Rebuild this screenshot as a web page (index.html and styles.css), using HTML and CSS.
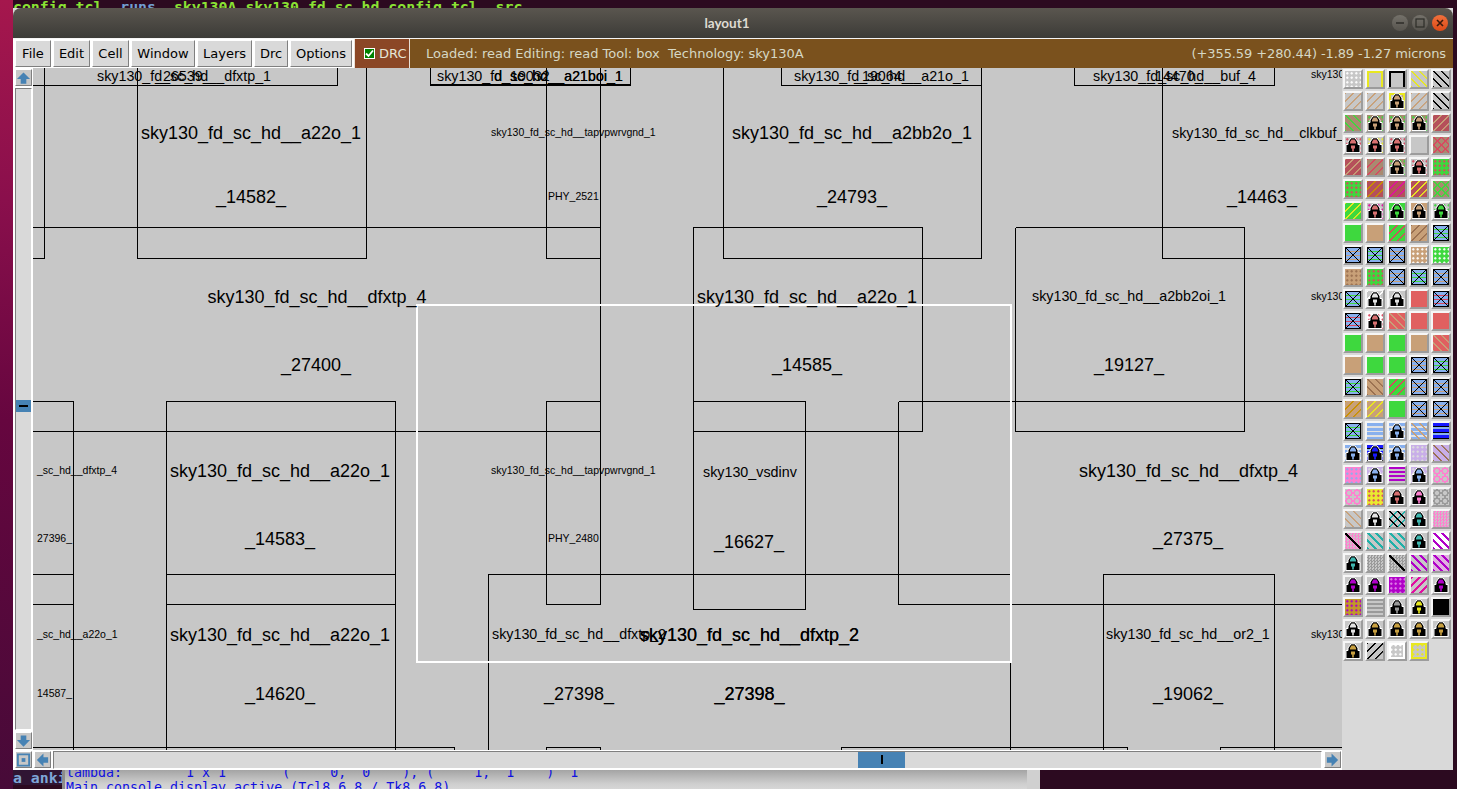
FILE: index.html
```html
<!DOCTYPE html>
<html lang="en">
<head>
<meta charset="utf-8">
<title>layout1</title>
<link rel="stylesheet" href="styles.css">
</head>
<body>
<svg class="defs" width="0" height="0" aria-hidden="true">
  <symbol id="lk" viewBox="0 0 16 16">
    <path fill="#000" stroke="#fff" d="M1 15.500V7.500h2V5L6 .8h4L13 5v2.500h2v8z"/>
    <path fill="currentColor" d="M5 6.500V5l1.500-2.500h3L11 5v1.500z"/>
    <rect x="6" y="8.500" width="4" height="3" fill="currentColor"/>
    <rect x="7.200" y="11" width="1.600" height="3.500" fill="currentColor"/>
  </symbol>
  <symbol id="up" viewBox="0 0 16 16"><path fill="#4682b4" d="M8 2l7 7h-4v5H5V9H1z"/></symbol>
  <symbol id="dn" viewBox="0 0 16 16"><path fill="#4682b4" d="M8 14l7-7h-4V2H5v5H1z"/></symbol>
  <symbol id="lf" viewBox="0 0 16 16"><path fill="#4682b4" d="M2 8l7-7v4h5v6H9v4z"/></symbol>
  <symbol id="rt" viewBox="0 0 16 16"><path fill="#4682b4" d="M14 8L7 1v4H2v6h5v4z"/></symbol>
</svg>

<div class="strip"></div>
<div class="desk">
  <div class="term-top"><span class="gr">config.tcl</span>  <span class="bl">runs</span>  <span class="gr">sky130A</span> <span class="gr">sky130_fd_sc_hd_config.tcl</span>  <span class="gr">src</span></div>
  <div class="desk-gap"></div>
  <div class="term-bottom">
    <div class="shell">a_anki</div>
    <div class="console">
      <div class="con-line">lambda:        1 x 1       (     0,  0    ), (     1,  1    )  1</div>
      <div class="con-line">Main console display active (Tcl8.6.8 / Tk8.6.8)</div>
    </div>
    <div class="shell-right"></div>
  </div>
</div>

<div class="win">
  <div class="title">
    <div class="title-text">layout1</div>
    <div class="controls">
      <span class="ctl"><svg width="10" height="10" viewBox="0 0 10 10"><path d="M1 5h8" stroke="#2e2d29" stroke-width="1.500"/></svg></span>
      <span class="ctl"><svg width="10" height="10" viewBox="0 0 10 10"><rect x="1" y="1" width="8" height="8" fill="none" stroke="#2e2d29" stroke-width="1.200"/></svg></span>
      <span class="ctl close"><svg width="10" height="10" viewBox="0 0 10 10"><path d="M2 2l6 6M8 2l-6 6" stroke="#3a1a0c" stroke-width="1.600"/></svg></span>
    </div>
  </div>
  <div class="bar">
    <div class="menu">
      <span class="mb w-file">File</span><span class="mb w-edit">Edit</span><span class="mb w-cell">Cell</span><span class="mb w-window">Window</span><span class="mb w-layers">Layers</span><span class="mb w-drc">Drc</span><span class="mb w-options">Options</span>
    </div>
    <div class="drc"><span class="chk"><svg width="9" height="9" viewBox="0 0 9 9"><path d="M1 4.500l2.500 2.500L8 1.500" fill="none" stroke="#fff" stroke-width="1.800"/></svg></span>DRC</div>
    <div class="status"><span>Loaded: read Editing: read Tool: box&nbsp; Technology: sky130A</span><span class="coords">(+355.59 +280.44) -1.89 -1.27 microns</span></div>
  </div>
  <div class="work">
    <div class="vs">
      <span class="arrow"><svg width="16" height="16"><use href="#up"/></svg></span>
      <div class="vtrough"><span class="vthumb"></span></div>
      <span class="arrow"><svg width="16" height="16"><use href="#dn"/></svg></span>
    </div>
    <svg class="canvas" width="1309" height="682" viewBox="33 68 1309 682">
      <path class="ln" d="M33 85.500H337.500V68M44.500 68V258.500H33M137.500 68V258.500H366.500V68M33 227.500H600.500M546.500 258.500H600.500M546.500 68V258.500M600.500 68V604.500M33 401.500H73.500V750M166.500 750V401.500H395.500V750M33 431.500H600.500M546.500 604.500V401.500H600.500M546.500 604.500H600.500M33 574.500H73.500M33 604.500H73.500M166.500 574.500H395.500M166.500 604.500H395.500M488.500 750V574.500H1010.500V750M723.500 68V258.500H981.500V68M781.500 85.500H981.500M781.500 68V85.500M693.500 610V227.500H922.500V431.500H693.500M693.500 401.500H805.500V609.500H693.500M898.500 401.500H1342M898.500 401.500V604.500H1342M1015.500 227.500H1244.500V431.500H1015.500V227.500M1162.500 68V258.500H1342M1103.500 750V574.500H1274.500V750M1074.500 68V85.500H1274.500V68M33 747.500H454.500V750M546.500 750V747.500H600.500V750M841.500 750V747.500H1127.500V750M1220.500 750V747.500H1342M430.500 68V85M630.500 68V85"/>
      <path class="ln thick" d="M430 85H631"/>
      <path class="sel" d="M417 305H1011V662H417z"/>

      <g class="big">
        <text x="251" y="139">sky130_fd_sc_hd__a22o_1</text>
        <text x="251" y="203">_14582_</text>
        <text x="852" y="139">sky130_fd_sc_hd__a2bb2o_1</text>
        <text x="852" y="203">_24793_</text>
        <text x="1262" y="203">_14463_</text>
        <text x="317" y="303">sky130_fd_sc_hd__dfxtp_4</text>
        <text x="316" y="371">_27400_</text>
        <text x="807" y="303">sky130_fd_sc_hd__a22o_1</text>
        <text x="807" y="371">_14585_</text>
        <text x="1129" y="371">_19127_</text>
        <text x="280" y="477">sky130_fd_sc_hd__a22o_1</text>
        <text x="280" y="545">_14583_</text>
        <text x="1188.500" y="477">sky130_fd_sc_hd__dfxtp_4</text>
        <text x="1188" y="545">_27375_</text>
        <text x="749" y="548">_16627_</text>
        <text x="280" y="641">sky130_fd_sc_hd__a22o_1</text>
        <text x="280" y="700">_14620_</text>
        <text x="749.500" y="641">sky130_fd_sc_hd__dfxtp_2</text>
        <text x="749.500" y="641">sky130_fd_sc_hd__dfxtp_2</text>
        <text x="749.500" y="700">_27398_</text>
        <text x="749.500" y="700">_27398_</text>
        <text x="579" y="700">_27398_</text>
        <text x="1188" y="700">_19062_</text>
      </g>
      <g class="mid">
        <text x="97" y="81">sky130_fd_sc_hd__dfxtp_1</text>
        <text x="155" y="81">_26539_</text>
        <text x="437" y="81">sky130_fd_sc_hd__a21boi_1</text>
        <text x="494" y="81">d_sc_hd__a21boi_1</text>
        <text x="502" y="81">_19032_</text>
        <text x="794" y="81">sky130_fd_sc_hd__a21o_1</text>
        <text x="854" y="81">_19064_</text>
        <text x="1093" y="81">sky130_fd_sc_hd__buf_4</text>
        <text x="1147" y="81">_14470_</text>
        <text x="1172" y="138">sky130_fd_sc_hd__clkbuf_1</text>
        <text x="1032" y="301">sky130_fd_sc_hd__a2bb2oi_1</text>
        <text x="703" y="477">sky130_vsdinv</text>
        <text x="492" y="639">sky130_fd_sc_hd__dfxtp_2</text>
        <text x="1106" y="639">sky130_fd_sc_hd__or2_1</text>
      </g>
      <g class="small">
        <text x="491" y="136">sky130_fd_sc_hd__tapvpwrvgnd_1</text>
        <text x="548" y="200">PHY_2521</text>
        <text x="491" y="474">sky130_fd_sc_hd__tapvpwrvgnd_1</text>
        <text x="548" y="542">PHY_2480</text>
        <text x="37" y="474">_sc_hd__dfxtp_4</text>
        <text x="37" y="542">27396_</text>
        <text x="37" y="638">_sc_hd__a22o_1</text>
        <text x="37" y="697">14587_</text>
        <text x="1311" y="78">sky130</text>
        <text x="1311" y="300">sky130</text>
        <text x="1311" y="638">sky130</text>
      </g>
    </svg>
    <div class="pal">
      <span class="t bG dt cW"></span><span class="t bG yb"></span><span class="t bG kb"></span><span class="t bG bs cY"></span><span class="t bG bs cK"></span>
      <span class="t bG st cT"></span><span class="t bG st cT"></span><span class="t bG st cT yb"><svg class="lk cT"><use href="#lk"/></svg></span><span class="t bG st cT"></span><span class="t bG bs cK"></span>
      <span class="t bB bs cN"></span><span class="t bB dt cN"><svg class="lk cT"><use href="#lk"/></svg></span><span class="t bB dt cN"><svg class="lk cT"><use href="#lk"/></svg></span><span class="t bB dt cN"><svg class="lk cT"><use href="#lk"/></svg></span><span class="t bR st cT"></span>
      <span class="t bG dt cR"><svg class="lk cR"><use href="#lk"/></svg></span><span class="t bG dt cY"><svg class="lk cR"><use href="#lk"/></svg></span><span class="t bG dt cR"><svg class="lk cR"><use href="#lk"/></svg></span><span class="t bG"></span><span class="t bB cr cR"></span>
      <span class="t bR st cT"></span><span class="t bB st cR"></span><span class="t bB dt cN"><svg class="lk cT"><use href="#lk"/></svg></span><span class="t bG dt cR"><svg class="lk cR"><use href="#lk"/></svg></span><span class="t bN dt cR"></span>
      <span class="t bN dt cR"></span><span class="t bR st cO"></span><span class="t bR st cM"></span><span class="t bR st cY"></span><span class="t bB cr cN"></span>
      <span class="t bN st cY"></span><span class="t bG dt cM"><svg class="lk cR"><use href="#lk"/></svg></span><span class="t bN"><svg class="lk cN"><use href="#lk"/></svg></span><span class="t bT"><svg class="lk cT"><use href="#lk"/></svg></span><span class="t bG dt cN"><svg class="lk cN"><use href="#lk"/></svg></span>
      <span class="t bN"></span><span class="t bT"></span><span class="t bN st cR"></span><span class="t bT st cB"></span><span class="t xb cN"></span>
      <span class="t xb cT"></span><span class="t xb cN"></span><span class="t xb cT"></span><span class="t bT dt cW"></span><span class="t bN dt cW"></span>
      <span class="t bT dt cB"></span><span class="t bN dt cR"></span><span class="t xb cT"></span><span class="t xb cN"></span><span class="t xb cT"></span>
      <span class="t xb cN"></span><span class="t bG st cW"><svg class="lk cW"><use href="#lk"/></svg></span><span class="t bG"><svg class="lk cW"><use href="#lk"/></svg></span><span class="t bL"></span><span class="t xb cR"></span>
      <span class="t xb cR"></span><span class="t bW dt cR"><svg class="lk cR"><use href="#lk"/></svg></span><span class="t bL bs cT"></span><span class="t bL"></span><span class="t bL"></span>
      <span class="t bN"></span><span class="t bT"></span><span class="t bN"></span><span class="t bT"></span><span class="t bL bs cT"></span>
      <span class="t bT"></span><span class="t bN"></span><span class="t bN"></span><span class="t xb cT"></span><span class="t xb cN"></span>
      <span class="t xb cN"></span><span class="t bT bs cB"></span><span class="t bN st cR"></span><span class="t xb cT"></span><span class="t xb cT"></span>
      <span class="t bT st cO"></span><span class="t bT st cY"></span><span class="t bN"></span><span class="t xb cT"></span><span class="t xb cT"></span>
      <span class="t xb cN"></span><span class="t wv cA"></span><span class="t wv cA"><svg class="lk cA"><use href="#lk"/></svg></span><span class="t wv cT"></span><span class="t bH"></span>
      <span class="t wv cA"><svg class="lk cA"><use href="#lk"/></svg></span><span class="t bH"><svg class="lk cH"><use href="#lk"/></svg></span><span class="t wv cA"><svg class="lk cA"><use href="#lk"/></svg></span><span class="t bI dt cG"></span><span class="t bI bs cB"></span>
      <span class="t bP dt cA"></span><span class="t bI dt cG"><svg class="lk cA"><use href="#lk"/></svg></span><span class="t bG bd cU"></span><span class="t bI dt cG"><svg class="lk cA"><use href="#lk"/></svg></span><span class="t qf cP"></span>
      <span class="t qf cP"></span><span class="t bY dt cR"></span><span class="t bG"><svg class="lk cR"><use href="#lk"/></svg></span><span class="t bG"><svg class="lk cP"><use href="#lk"/></svg></span><span class="t qf cZ"></span>
      <span class="t bG bs cT"></span><span class="t bG"><svg class="lk cW"><use href="#lk"/></svg></span><span class="t bG cr cE tk"></span><span class="t bG"><svg class="lk cE"><use href="#lk"/></svg></span><span class="t dn cP"></span>
      <span class="t dn cP bk"></span><span class="t bG bs cE wd"></span><span class="t bG bs cE wd"></span><span class="t bG"><svg class="lk cE"><use href="#lk"/></svg></span><span class="t bW bs cU wd"></span>
      <span class="t bG"><svg class="lk cE"><use href="#lk"/></svg></span><span class="t dn cZ"></span><span class="t dn cZ bk"></span><span class="t bG bs cU wd"></span><span class="t bP2 bs cU wd"></span>
      <span class="t bG"><svg class="lk cU"><use href="#lk"/></svg></span><span class="t bG"><svg class="lk cU"><use href="#lk"/></svg></span><span class="t bU dt cV"></span><span class="t bG st cM wd"></span><span class="t bG"><svg class="lk cU"><use href="#lk"/></svg></span>
      <span class="t bO dt cU"></span><span class="t bG bd cZ"></span><span class="t bG"><svg class="lk cZ"><use href="#lk"/></svg></span><span class="t bG"><svg class="lk cY"><use href="#lk"/></svg></span><span class="t bK"></span>
      <span class="t bG"><svg class="lk cW"><use href="#lk"/></svg></span><span class="t bG"><svg class="lk cO"><use href="#lk"/></svg></span><span class="t bG"><svg class="lk cO"><use href="#lk"/></svg></span><span class="t bG"><svg class="lk cO"><use href="#lk"/></svg></span><span class="t bG"><svg class="lk cO"><use href="#lk"/></svg></span>
      <span class="t bG"><svg class="lk cO"><use href="#lk"/></svg></span><span class="t bG st cK"></span><span class="t bG dt cW wb"></span><span class="t bG dt cY ybr"></span>
    </div>
    <div class="hs">
      <span class="arrow zoom"><svg width="16" height="16" viewBox="0 0 16 16"><path fill="none" stroke="#4682b4" stroke-width="2" d="M2 2h12v12H2z"/><rect x="6" y="6" width="4" height="4" fill="#4682b4"/></svg></span>
      <span class="arrow"><svg width="16" height="16"><use href="#lf"/></svg></span>
      <div class="htrough"><span class="hthumb"></span></div>
      <span class="arrow"><svg width="16" height="16"><use href="#rt"/></svg></span>
    </div>
  </div>
</div>
</body>
</html>
```

FILE: styles.css
```css
* { box-sizing: border-box; }
html, body { margin: 0; height: 789px; overflow: hidden; }
body { display: flex; width: 1457px; background: #2c0a20; position: relative; }
.defs { position: absolute; }
.strip { width: 13px; background: linear-gradient(180deg, #a5174d 0, #8a0f4c 200px, #66063f 420px, #470a38 789px); }
.desk { flex: 1; display: flex; flex-direction: column; min-width: 0; }
.term-top { height: 8px; overflow: hidden; white-space: pre; font: 700 14.85px/15px "DejaVu Sans Mono", monospace; }
.gr { color: #8ae234; }
.bl { color: #729fcf; }
.desk-gap { flex: 1; }
.term-bottom { height: 19px; display: flex; }
.shell { width: 49px; height: 15px; overflow: hidden; background: #2f1533; color: #7ea6d8; font: 700 14.85px/16px "DejaVu Sans Mono", monospace; }
.console { width: 978px; padding-left: 1px; background: linear-gradient(180deg, #a4a4a4 0, #cfcfcf 14px, #d6d6d6); border-left: 3px solid #8c8c8c; border-right: 13px solid #d0d0d0; overflow: hidden; }
.con-line { font: 13.3px/15px "DejaVu Sans Mono", monospace; color: #1010e0; white-space: pre; position: relative; top: -5px; }
.shell-right { flex: 1; }

.win { position: absolute; left: 13px; top: 8px; width: 1440px; height: 762px; display: flex; flex-direction: column; background: #d9d9d9; }
.title { height: 30px; flex: none; display: flex; align-items: center; justify-content: center; position: relative; border-radius: 8px 8px 0 0; background: linear-gradient(180deg, #5a564f, #3c3b37); }
.title-text { font: 700 13.5px "Lato", sans-serif; color: #dfdbd2; margin-right: 12px; }
.controls { position: absolute; right: 5px; top: 7px; display: flex; gap: 4px; }
.ctl { width: 16px; height: 16px; border-radius: 50%; display: flex; align-items: center; justify-content: center; background: linear-gradient(180deg, #74716a, #57544e); }
.close { background: linear-gradient(180deg, #f0703c, #dc4a17); }

.bar { height: 30px; flex: none; display: flex; background: #d9d9d9; border-top: 1px solid #f4f4f4; }
.menu { display: flex; gap: 2px; padding: 1px 0 1px 2px; width: 341px; background: #fff; }
.mb { height: 27px; display: flex; align-items: center; justify-content: center; background: #d9d9d9; border: 1px solid; border-color: #fff #7f7f7f #7f7f7f #fff; font: 13px "DejaVu Sans", sans-serif; color: #000; }
.w-file { width: 36px; } .w-edit { width: 37px; } .w-cell { width: 37px; } .w-window { width: 64px; } .w-layers { width: 55px; } .w-drc { width: 34px; } .w-options { width: 62px; }
.drc { width: 56px; display: flex; align-items: center; gap: 4px; padding-left: 9px; background: #8b4726; border: 1px solid #e8e0d8; border-width: 0 1px 0 1px; font: 13px "DejaVu Sans", sans-serif; color: #e6e6d8; }
.chk { width: 11px; height: 11px; display: flex; align-items: center; justify-content: center; background: #008000; border: 1px solid #fff; }
.status { flex: 1; display: flex; justify-content: space-between; padding: 0 7px 0 16px; align-items: center; background: #7a511d; font: 13px "DejaVu Sans", sans-serif; color: #d6d8c4; white-space: nowrap; }
.coords { letter-spacing: -0.1px; }

.work { flex: 1; display: grid; grid-template-columns: 20px 1309px 111px; grid-template-rows: 682px 20px; background: #d9d9d9; }
.vs { display: flex; flex-direction: column; gap: 2px; padding: 1px 1px 1px 2px; background: #fff; }
.arrow { width: 17px; height: 17px; flex: none; display: flex; align-items: center; justify-content: center; background: #c7c7c7; border: 1px solid; border-color: #fff #7f7f7f #7f7f7f #fff; }
.vtrough { flex: 1; background: #d9d9d9; border: 1px solid; border-color: #7f7f7f #fff #fff #7f7f7f; padding-top: 311px; }
.vthumb { display: flex; align-items: center; justify-content: center; height: 12px; background: #4682b4; }
.vthumb::after { content: ""; width: 9px; height: 2px; background: #000; }
.canvas { display: block; background: #c7c7c7; }
.ln { fill: none; stroke: #000; stroke-width: 1; shape-rendering: crispEdges; }
.thick { stroke-width: 2; }
.sel { fill: none; stroke: #fff; stroke-width: 2; shape-rendering: crispEdges; }
.big text, .mid text, .small text { font-family: "Liberation Sans", Arial, sans-serif; fill: #000; }
.big text { font-size: 18px; text-anchor: middle; }
.mid text { font-size: 14.3px; }
.small text { font-size: 10.5px; }

.pal { grid-column: 3; grid-row: 1 / span 2; display: grid; grid-template-columns: repeat(5, 20px); grid-auto-rows: 20px; gap: 2px; padding: 1px 0 0 1px; align-content: start; background: #d9d9d9; }
.hs { grid-column: 1 / span 2; display: flex; align-items: center; gap: 2px; padding: 0 1px 1px 2px; background: #fff; }
.htrough { flex: 1; height: 18px; background: #d9d9d9; border: 1px solid; border-color: #7f7f7f #fff #fff #7f7f7f; padding-left: 804px; }
.hthumb { display: flex; align-items: center; justify-content: center; width: 47px; height: 100%; background: #4682b4; }
.hthumb::after { content: ""; width: 2px; height: 9px; background: #000; }

.t { --b: #c7c7c7; --c: #000; display: block; width: 20px; height: 20px; border: 2px solid; border-color: #f6f6f6 #9c9c9c #9c9c9c #f6f6f6; background: var(--b); background-clip: padding-box; overflow: hidden; }
.lk { display: block; width: 16px; height: 16px; }
.lk.cT { color: #c8a078; } .lk.cN { color: #3ed83e; } .lk.cR { color: #d87070; } .lk.cW { color: #e4e4e4; } .lk.cA { color: #88b0ee; } .lk.cH { color: #1818ff; } .lk.cP { color: #ff80d0; } .lk.cE { color: #40b8b0; } .lk.cU { color: #b000c8; } .lk.cZ { color: #999; } .lk.cY { color: #e8e820; } .lk.cO { color: #c8a040; }
.bG { --b: #c7c7c7; } .bT { --b: #c8a078; } .bB { --b: #a98a70; } .bR { --b: #b5505a; } .bN { --b: #3ed83e; } .bL { --b: #e06060; } .bI { --b: #c8aee8; } .bP { --b: #ff80d0; } .bP2 { --b: #e0b0e0; } .bU { --b: #b000c8; } .bY { --b: #eaea30; } .bK { --b: #000; } .bW { --b: #fff; } .bO { --b: #c09a28; }
.bH { background: repeating-linear-gradient(180deg, #1818ff 0 3px, #000 3px 4px, #88b0ee 4px 6px) padding-box; }
.cW { --c: #fff; } .cY { --c: #e8e820; } .cK { --c: #000; } .cT { --c: #c8a078; } .cN { --c: #3ed83e; } .cR { --c: #d84860; } .cO { --c: #c89000; } .cM { --c: #e010a0; } .cB { --c: #9a7050; } .cA { --c: #88b0ee; } .cG { --c: #dcdcdc; } .cU { --c: #b000c8; } .cP { --c: #ff80d0; } .cZ { --c: #9a9a9a; } .cE { --c: #20b0a8; } .cV { --c: #e080e8; }
.st { background: repeating-linear-gradient(135deg, var(--c) 0 .8px, transparent 1.100px 5.6px) padding-box, var(--b) padding-box; }
.bs { background: repeating-linear-gradient(45deg, var(--c) 0 .8px, transparent 1.100px 5.6px) padding-box, var(--b) padding-box; }
.wd { background: repeating-linear-gradient(45deg, var(--c) 0 1.600px, transparent 1.900px 5.6px) padding-box, var(--b) padding-box; }
.st.wd { background: repeating-linear-gradient(135deg, var(--c) 0 1.600px, transparent 1.900px 5.6px) padding-box, var(--b) padding-box; }
.cr { background: repeating-linear-gradient(45deg, var(--c) 0 .8px, transparent 1.100px 5.6px) padding-box, repeating-linear-gradient(135deg, var(--c) 0 .8px, transparent 1.100px 5.6px) padding-box, var(--b) padding-box; }
.tk { background: repeating-linear-gradient(45deg, #000 0 1px, transparent 1.200px 5.6px) padding-box, repeating-linear-gradient(135deg, var(--c) 0 1px, transparent 1.200px 5.6px) padding-box, var(--b) padding-box; }
.dt { background: radial-gradient(circle, var(--c) 1.100px, transparent 1.300px) 0 0 / 4.500px 4.500px padding-box, var(--b) padding-box; }
.bd { background: repeating-linear-gradient(180deg, var(--c) 0 2px, transparent 2px 4px) padding-box, var(--b) padding-box; }
.wv { background: repeating-linear-gradient(180deg, var(--c) 0 3px, #e2e2e2 3px 4.500px) padding-box; }
.wv.cT { background: repeating-linear-gradient(45deg, #c8a078 0 1px, transparent 1.200px 5.6px) padding-box, repeating-linear-gradient(180deg, #88b0ee 0 3px, #e2e2e2 3px 4.500px) padding-box; }
.qf { background: radial-gradient(circle, transparent 2px, var(--c) 2.200px 3.600px, transparent 3.800px) 0 0 / 8px 8px padding-box, #c7c7c7 padding-box; }
.dn { background: repeating-conic-gradient(var(--c) 0 25%, #c7c7c7 0 50%) 0 0 / 3px 3px padding-box; }
.bk { background: linear-gradient(45deg, transparent calc(50% - 1px), #000 calc(50% - 1px) calc(50% + 1px), transparent calc(50% + 1px)) padding-box, repeating-conic-gradient(var(--c) 0 25%, #c7c7c7 0 50%) 0 0 / 3px 3px padding-box; }
.xb { background:
  linear-gradient(45deg, transparent calc(50% - .7px), #000 calc(50% - .7px) calc(50% + .7px), transparent calc(50% + .7px)) padding-box,
  linear-gradient(-45deg, transparent calc(50% - .7px), #000 calc(50% - .7px) calc(50% + .7px), transparent calc(50% + .7px)) padding-box,
  repeating-linear-gradient(180deg, var(--c) 0 1px, transparent 1px 4px) padding-box,
  #88b0ee padding-box; box-shadow: inset 0 0 0 1px #000; }
.yb { box-shadow: inset 0 2px 0 #e8e820, inset 2px 0 0 #e8e820, inset -2px 0 0 #e8e820; }
.kb { box-shadow: inset 0 2px 0 #000, inset 2px 0 0 #000, inset -2px 0 0 #000; }
.wb { box-shadow: inset 0 0 0 2px #fff; }
.ybr { box-shadow: inset 0 0 0 2px #e8e820; }
```
